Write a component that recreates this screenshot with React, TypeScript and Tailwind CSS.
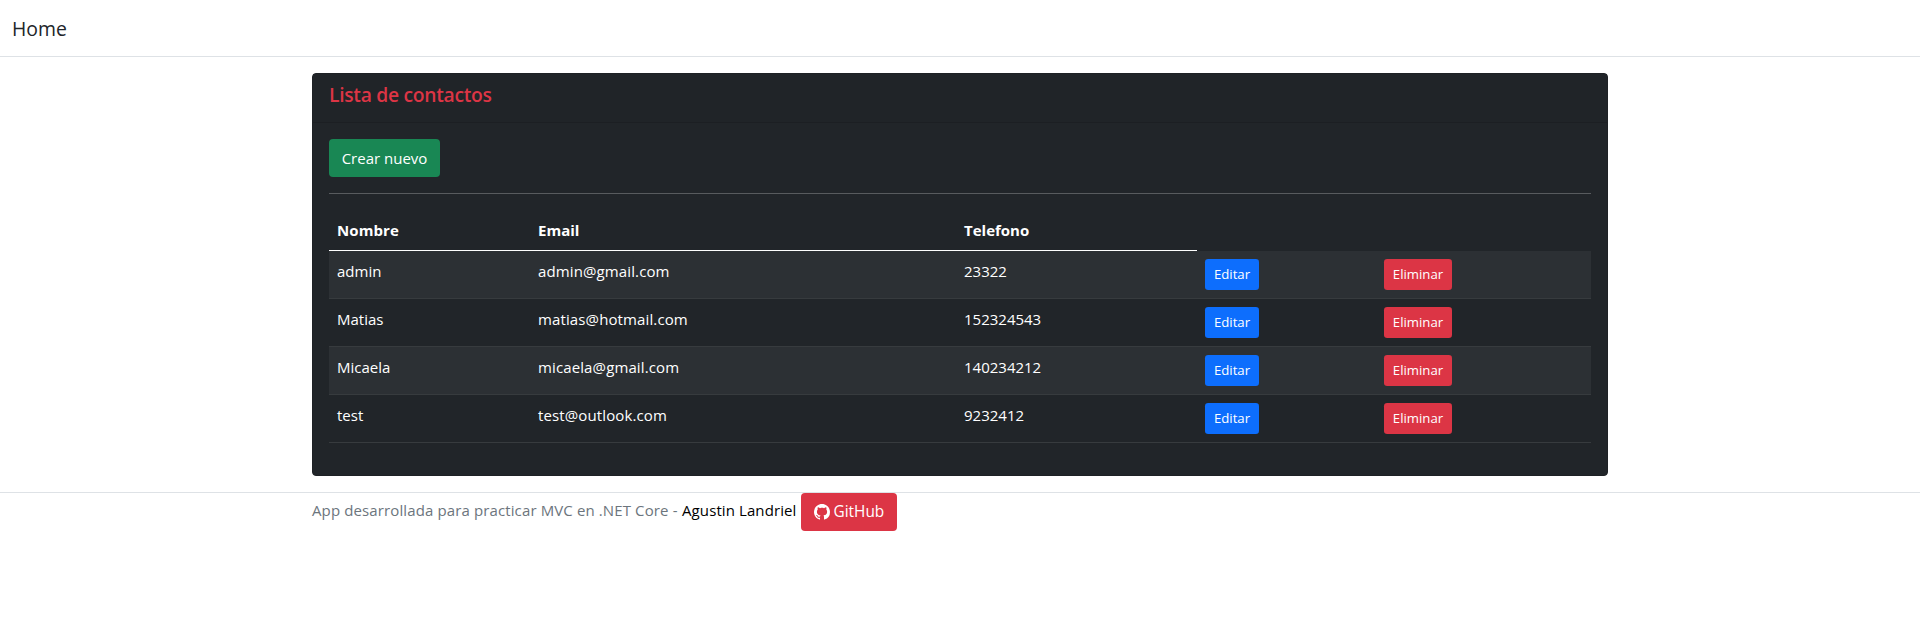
const contacts = [
  { name: "admin", email: "admin@gmail.com", phone: "23322" },
  { name: "Matias", email: "matias@hotmail.com", phone: "152324543" },
  { name: "Micaela", email: "micaela@gmail.com", phone: "140234212" },
  { name: "test", email: "test@outlook.com", phone: "9232412" },
];

export default function App() {
  return (
    <div className="min-h-[621px] bg-white font-['Open_Sans',sans-serif] text-[15px] leading-6 text-[#212529]">
      <header className="mb-4 flex h-[57px] items-center border-b border-[#dee2e6] px-3">
        <a href="#" className="pt-px text-[19.4px] leading-[30px]">Home</a>
      </header>

      <main className="mx-auto w-[1296px] rounded border border-[#1e2125] bg-[#212529] text-white">
        <div className="h-[49px] border-b border-[#1c1f23] bg-[#202428] px-4 pt-[9px]">
          <h5 className="text-[19.3px] leading-6 font-semibold tracking-[-0.3px] text-[#dc3545]">
            Lista de contactos
          </h5>
        </div>
        <div className="p-4">
          <button className="flex h-[38px] w-[111px] items-center justify-center rounded bg-[#198754] whitespace-nowrap">
            Crear nuevo
          </button>
          <hr className="my-4 border-[#585b5e]" />
          <table className="mb-4 w-[1262px] table-fixed border-separate border-spacing-0 text-left align-top">
            <colgroup>
              <col className="w-[201px]" />
              <col className="w-[426px]" />
              <col className="w-[241px]" />
              <col className="w-[179px]" />
              <col className="w-[215px]" />
            </colgroup>
            <thead>
              <tr className="h-[41px]">
                <th className="border-b border-white p-2 tracking-[0.1px]">Nombre</th>
                <th className="border-b border-white p-2">Email</th>
                <th className="border-b border-white p-2">Telefono</th>
                <th />
                <th />
              </tr>
            </thead>
            <tbody>
              {contacts.map((c) => (
                <tr
                  key={c.name}
                  className="h-12 align-top odd:bg-[#2c3034] *:border-b *:border-[#373b3e] *:px-2 *:pt-2"
                >
                  <td>{c.name}</td>
                  <td className="tracking-[0.12px]">{c.email}</td>
                  <td>{c.phone}</td>
                  <td>
                    <button className="flex h-[31px] w-[54px] items-center justify-center rounded-[3.2px] bg-[#0d6efd] text-[13.2px] leading-[21px]">
                      Editar
                    </button>
                  </td>
                  <td>
                    <button className="flex h-[31px] w-[68px] items-center justify-center rounded-[3.2px] bg-[#dc3545] text-[13.2px] leading-[21px]">
                      Eliminar
                    </button>
                  </td>
                </tr>
              ))}
            </tbody>
          </table>
        </div>
      </main>

      <footer className="mt-4 border-t border-[#dee2e6] text-[#6c757d]">
        <div className="mx-auto flex w-[1296px] whitespace-nowrap">
          <p className="w-[370px] pt-[5px] tracking-[0.12px]">
            App desarrollada para practicar MVC en .NET Core -
          </p>
          <a href="#" className="w-[119px] pt-[5px] tracking-[0.1px] text-black">Agustin Landriel</a>
          <a href="#" className="flex h-[38px] w-24 items-center gap-1 rounded bg-[#dc3545] pl-[12.5px] text-white">
            <svg viewBox="0 0 16 16" className="size-4 fill-current">
              <path d="M8 0C3.58 0 0 3.58 0 8c0 3.54 2.29 6.53 5.47 7.59.4.07.55-.17.55-.38 0-.19-.01-.82-.01-1.49-2.01.37-2.53-.49-2.69-.94-.09-.23-.48-.94-.82-1.13-.28-.15-.68-.52-.01-.53.63-.01 1.08.58 1.23.82.72 1.21 1.87.87 2.33.66.07-.52.28-.87.51-1.07-1.78-.2-3.64-.89-3.64-3.95 0-.87.31-1.59.82-2.15-.08-.2-.36-1.02.08-2.12 0 0 .67-.21 2.2.82.64-.18 1.32-.27 2-.27s1.36.09 2 .27c1.53-1.04 2.2-.82 2.2-.82.44 1.1.16 1.92.08 2.12.51.56.82 1.27.82 2.15 0 3.07-1.87 3.75-3.65 3.95.29.25.54.73.54 1.48 0 1.07-.01 1.93-.01 2.2 0 .21.15.46.55.38A8.01 8.01 0 0 0 16 8c0-4.42-3.58-8-8-8" />
            </svg>
            <span className="text-[15.4px]">GitHub</span>
          </a>
        </div>
      </footer>
    </div>
  );
}
